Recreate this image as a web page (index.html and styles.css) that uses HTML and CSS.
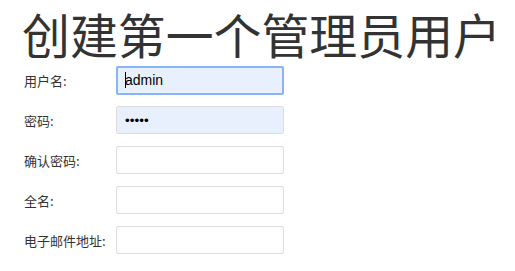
FILE: index.html
```html
<!DOCTYPE html>
<html lang="zh-CN">
<head>
<meta charset="utf-8">
<link rel="stylesheet" href="styles.css">
</head>
<body>
<h1 class="title">创建第一个管理员用户</h1>
<form class="form">
  <div class="row">
    <label class="label">用户名:</label>
    <div class="input input-focus"><span class="caret"></span>admin</div>
  </div>
  <div class="row">
    <label class="label">密码:</label>
    <div class="input input-filled">•••••</div>
  </div>
  <div class="row">
    <label class="label">确认密码:</label>
    <div class="input"></div>
  </div>
  <div class="row">
    <label class="label">全名:</label>
    <div class="input"></div>
  </div>
  <div class="row">
    <label class="label">电子邮件地址:</label>
    <div class="input"></div>
  </div>
</form>
</body>
</html>
```
FILE: styles.css
```css
html, body {
  margin: 0;
  padding: 0;
  background: #fff;
}
body {
  font-family: "Noto Sans CJK SC", "Noto Sans", sans-serif;
  color: #333;
}
.title {
  margin: 6px 0 0 22px;
  font-size: 47.9px;
  line-height: 54px;
  font-weight: 400;
  color: #333;
  white-space: nowrap;
}
.form {
  display: flex;
  flex-direction: column;
  gap: 12px;
  margin: 6px 0 0 24px;
}
.row {
  display: flex;
  align-items: center;
  height: 28px;
}
.label {
  width: 92px;
  font-size: 13px;
  color: #333;
  white-space: nowrap;
}
.input {
  box-sizing: border-box;
  width: 168px;
  height: 28px;
  border: 1px solid #ddd;
  border-radius: 2px;
  background: #fff;
  font-family: "Liberation Sans", Arial, sans-serif;
  font-size: 14px;
  color: #000;
  display: flex;
  align-items: center;
  padding-left: 8px;
}
.input-focus {
  height: 29px;
  border: 2px solid #8ab4f8;
  background: #e8f0fe;
  padding-left: 7px;
}
.input-filled {
  background: #e8f0fe;
  border-color: #ddd;
  font-size: 13.5px;
}
.caret {
  display: inline-block;
  width: 1px;
  height: 16px;
  background: #000;
  margin-right: -1px;
}
```
